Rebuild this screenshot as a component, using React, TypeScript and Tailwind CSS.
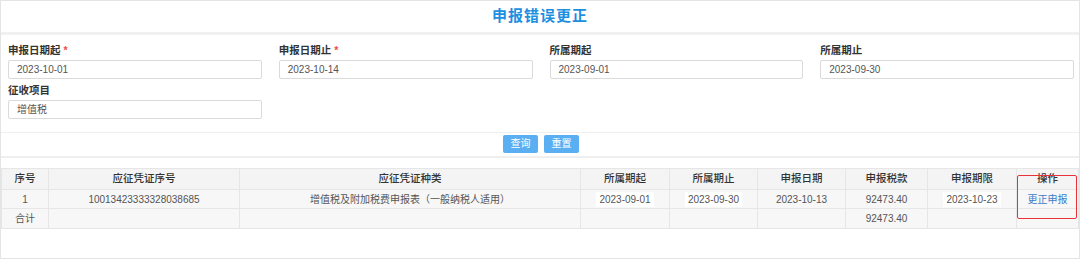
import React from "react";

const font = { fontFamily: '"Liberation Sans", "Noto Sans CJK SC", sans-serif' };

type Field = { label: string; value: string; required?: boolean };

const fields: Field[] = [
  { label: "申报日期起", value: "2023-10-01", required: true },
  { label: "申报日期止", value: "2023-10-14", required: true },
  { label: "所属期起", value: "2023-09-01" },
  { label: "所属期止", value: "2023-09-30" },
  { label: "征收项目", value: "增值税" },
];

const columns = [
  { title: "序号", w: "w-[47px]" },
  { title: "应征凭证序号", w: "w-[191px]" },
  { title: "应征凭证种类", w: "w-[341px]" },
  { title: "所属期起", w: "w-[89px]" },
  { title: "所属期止", w: "w-[88px]" },
  { title: "申报日期", w: "w-[88px]" },
  { title: "申报税款", w: "w-[82px]" },
  { title: "申报期限", w: "w-[89px]" },
  { title: "操作", w: "" },
];

const FormField = ({ f }: { f: Field }) => (
  <div>
    <div className="h-[14px] leading-[14px] mb-[3px] text-[10.5px] font-semibold text-[#333]">
      {f.label}
      {f.required && <span className="text-[#f04848] ml-[3px]">*</span>}
    </div>
    <div className="h-[19px] border border-[#dadada] rounded-[2px] px-[8px] flex items-center text-[10px] text-[#555] bg-white">
      {f.value}
    </div>
  </div>
);

const Boxed = ({ children }: { children: React.ReactNode }) => (
  <span className="bg-white px-[3px] py-[2px]">{children}</span>
);

export default function App() {
  const td = "border border-[#e6e6e6] text-center text-[10px] text-[#555] px-1";
  return (
    <div style={font} className="relative w-[1080px] h-[259px] bg-white border border-[#e4e4e4] overflow-hidden">
      <div className="h-[31px] flex items-center justify-center text-[15px] font-bold text-[#1d8fe1] tracking-[1px]">
        申报错误更正
      </div>
      <div className="h-[3px] bg-[#f1f1f1]" />

      <div className="grid grid-cols-4 gap-x-[17px] gap-y-[4px] pl-[7px] pr-[5px] pt-[8px]">
        {fields.map((f) => (
          <FormField key={f.label} f={f} />
        ))}
      </div>

      <div className="mt-[13px] h-px bg-[#efefef]" />
      <div className="flex justify-center gap-[6px] pt-[2px] pl-[2px]">
        <button className="w-[35px] h-[18px] rounded-[2px] bg-[#5aaef2] text-white text-[10px] leading-none">
          查询
        </button>
        <button className="w-[35px] h-[18px] rounded-[2px] bg-[#5aaef2] text-white text-[10px] leading-none">
          重置
        </button>
      </div>
      <div className="mt-[3px] h-[2px] bg-[#efefef]" />

      <table className="mt-[10px] w-full table-fixed border-collapse">
        <colgroup>
          {columns.map((c) => (
            <col key={c.title} className={c.w} />
          ))}
        </colgroup>
        <thead>
          <tr className="h-[21px] bg-[#f4f4f4]">
            {columns.map((c) => (
              <th key={c.title} className="border border-[#e6e6e6] text-[10.5px] font-medium text-[#333] text-center">
                {c.title}
              </th>
            ))}
          </tr>
        </thead>
        <tbody>
          <tr className="h-[19px] bg-[#f7f7f7]">
            <td className={td}>1</td>
            <td className={td}>10013423333328038685</td>
            <td className={td}>增值税及附加税费申报表（一般纳税人适用）</td>
            <td className={td}><Boxed>2023-09-01</Boxed></td>
            <td className={td}><Boxed>2023-09-30</Boxed></td>
            <td className={td}>2023-10-13</td>
            <td className={td}>92473.40</td>
            <td className={td}><Boxed>2023-10-23</Boxed></td>
            <td className={`${td} !text-[#3b7cc9]`}>更正申报</td>
          </tr>
          <tr className="h-[20px] bg-[#f7f7f7]">
            <td className={td}>合计</td>
            <td className={td}></td>
            <td className={td}></td>
            <td className={td}></td>
            <td className={td}></td>
            <td className={td}></td>
            <td className={td}>92473.40</td>
            <td className={td}></td>
            <td className={td}></td>
          </tr>
        </tbody>
      </table>

      <div className="absolute left-[1016px] top-[174px] w-[60px] h-[44px] border-[1.5px] border-[#e8323a] rounded-[2px] pointer-events-none" />
    </div>
  );
}
